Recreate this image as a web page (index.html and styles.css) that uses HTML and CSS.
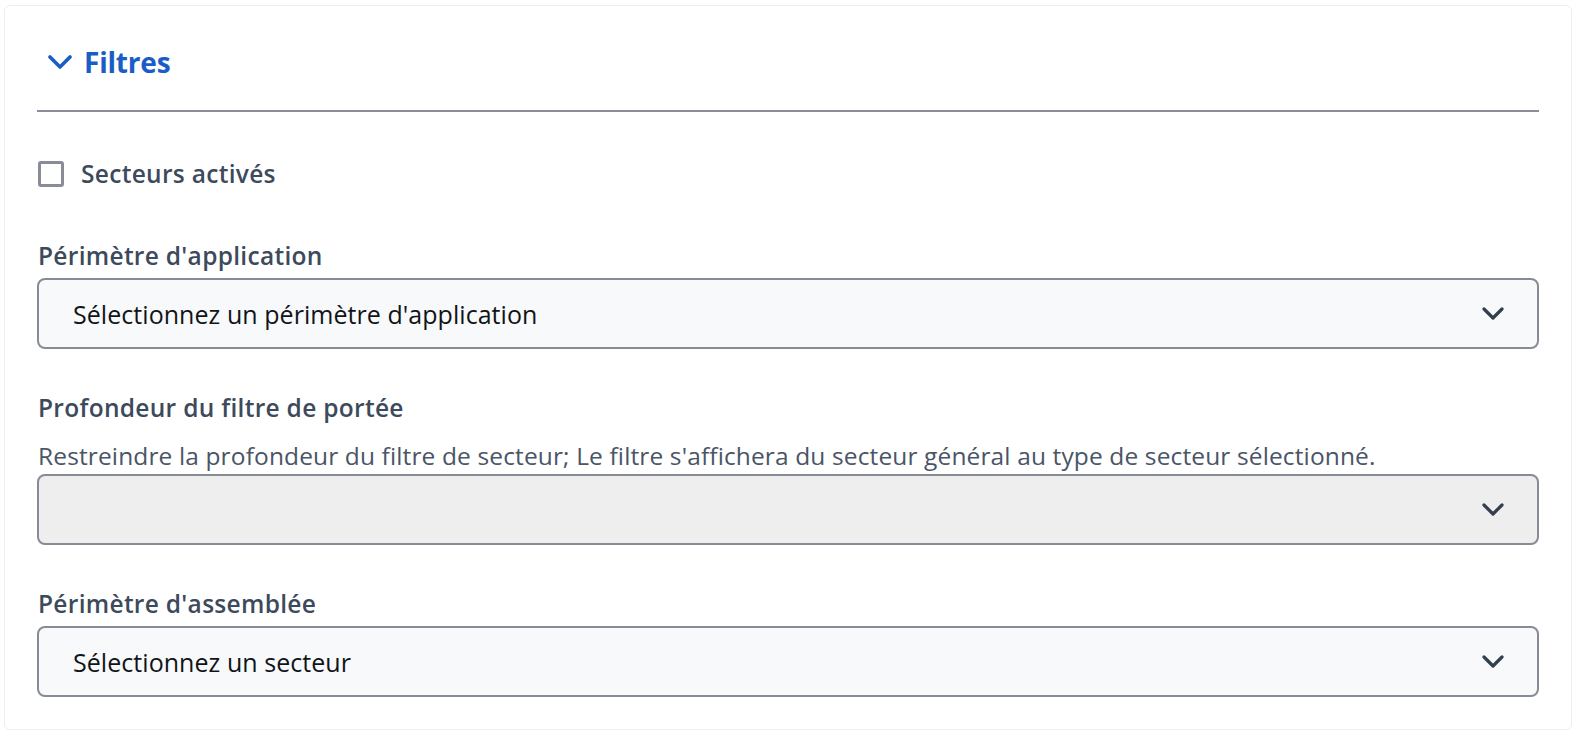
FILE: index.html
```html
<!DOCTYPE html>
<html lang="fr">
<head>
<meta charset="utf-8">
<title>Filtres</title>
<link rel="stylesheet" href="styles.css">
</head>
<body>
<section class="card">
  <header class="card-header">
    <svg class="toggle-icon" width="24" height="14" viewBox="0 0 24 14" aria-hidden="true">
      <path d="M2 2 L12 12 L22 2" fill="none" stroke="currentColor" stroke-width="3.6" stroke-linecap="round" stroke-linejoin="round"/>
    </svg>
    <h2 class="card-title">Filtres</h2>
  </header>
  <hr class="divider">
  <label class="check-row">
    <span class="checkbox"></span>
    <span class="check-label">Secteurs activés</span>
  </label>

  <div class="field">
    <div class="field-label">Périmètre d'application</div>
    <div class="select">
      <span class="select-value">Sélectionnez un périmètre d'application</span>
      <svg class="select-icon" width="22" height="13" viewBox="0 0 22 13" aria-hidden="true">
        <path d="M2 2 L11 11 L20 2" fill="none" stroke="currentColor" stroke-width="3.2" stroke-linecap="round" stroke-linejoin="round"/>
      </svg>
    </div>
  </div>

  <div class="field">
    <div class="field-label">Profondeur du filtre de portée</div>
    <div class="field-help">Restreindre la profondeur du filtre de secteur; Le filtre s'affichera du secteur général au type de secteur sélectionné.</div>
    <div class="select select-disabled">
      <span class="select-value"></span>
      <svg class="select-icon" width="22" height="13" viewBox="0 0 22 13" aria-hidden="true">
        <path d="M2 2 L11 11 L20 2" fill="none" stroke="currentColor" stroke-width="3.2" stroke-linecap="round" stroke-linejoin="round"/>
      </svg>
    </div>
  </div>

  <div class="field">
    <div class="field-label">Périmètre d'assemblée</div>
    <div class="select">
      <span class="select-value">Sélectionnez un secteur</span>
      <svg class="select-icon" width="22" height="13" viewBox="0 0 22 13" aria-hidden="true">
        <path d="M2 2 L11 11 L20 2" fill="none" stroke="currentColor" stroke-width="3.2" stroke-linecap="round" stroke-linejoin="round"/>
      </svg>
    </div>
  </div>
</section>
</body>
</html>
```
FILE: styles.css
```css
* { box-sizing: border-box; }
html, body { margin: 0; padding: 0; background: #ffffff; }
body {
  font-family: "Open Sans", "Noto Sans", sans-serif;
  color: #3d4a5c;
  padding: 5px 14px 14px 4px;
}
.card {
  border: 1px solid #eceef2;
  border-radius: 6px;
  padding: 32px 32px 32px 32px;
  background: #fff;
}
.card-header {
  display: flex;
  align-items: center;
  gap: 12px;
  height: 48px;
  padding-left: 11px;
  color: #1a5dc6;
}
.toggle-icon { flex: none; }
.card-title {
  margin: 0;
  font-size: 28px;
  font-weight: 700;
  line-height: 48px;
  color: #1a5dc6;
  letter-spacing: -0.2px;
}
.divider {
  margin: 24px 0 0 0;
  border: 0;
  height: 2px;
  background: #8a8d99;
}
.check-row {
  display: flex;
  align-items: center;
  gap: 17px;
  height: 36px;
  margin-top: 44px;
  margin-left: 1px;
}
.checkbox {
  width: 26px;
  height: 26px;
  border: 3px solid #8a8b99;
  border-radius: 3px;
  background: #fff;
}
.check-label {
  font-size: 24.5px;
  font-weight: 600;
  line-height: 36px;
  letter-spacing: 0.3px;
}
.field { margin-top: 41px; }
.check-row + .field { margin-top: 46px; }
.field-label {
  font-size: 24.5px;
  font-weight: 600;
  line-height: 36px;
  letter-spacing: 0.3px;
  margin-bottom: 4px;
  margin-left: 1px;
}
.field-help {
  font-size: 24.5px;
  line-height: 36px;
  letter-spacing: 0.13px;
  margin-top: 12px;
  margin-left: 1px;
  color: #4a5567;
}
.select {
  display: flex;
  align-items: center;
  justify-content: space-between;
  height: 71px;
  border: 2px solid #878b96;
  border-radius: 8px;
  background: #f8f9fb;
  padding: 0 33px 0 34px;
  color: #111418;
}
.select-disabled { background: #eeeeee; }
.select-value {
  font-size: 25px;
  line-height: 36px;
  letter-spacing: 0.05px;
}
.select-icon { color: #343f4d; flex: none; }
```
